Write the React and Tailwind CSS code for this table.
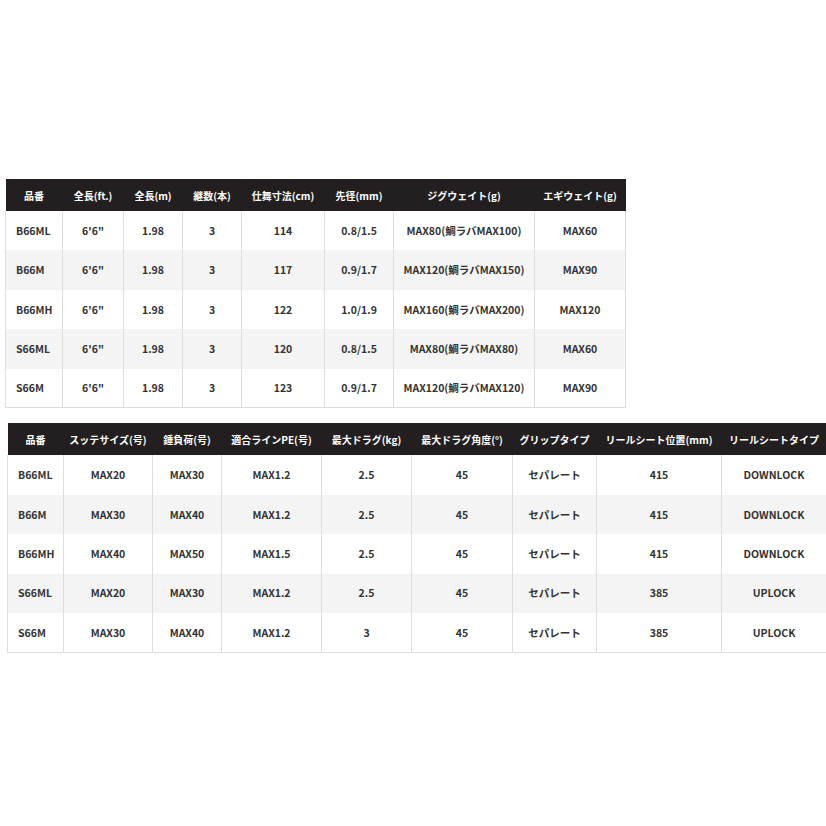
const spec1 = {
  cols: [57, 61, 59, 59, 83, 69, 141, 91],
  head: ["品番", "全長(ft.)", "全長(m)", "継数(本)", "仕舞寸法(cm)", "先径(mm)", "ジグウェイト(g)", "エギウェイト(g)"],
  rows: [
    ["B66ML", "6'6\"", "1.98", "3", "114", "0.8/1.5", "MAX80(鯛ラバMAX100)", "MAX60"],
    ["B66M", "6'6\"", "1.98", "3", "117", "0.9/1.7", "MAX120(鯛ラバMAX150)", "MAX90"],
    ["B66MH", "6'6\"", "1.98", "3", "122", "1.0/1.9", "MAX160(鯛ラバMAX200)", "MAX120"],
    ["S66ML", "6'6\"", "1.98", "3", "120", "0.8/1.5", "MAX80(鯛ラバMAX80)", "MAX60"],
    ["S66M", "6'6\"", "1.98", "3", "123", "0.9/1.7", "MAX120(鯛ラバMAX120)", "MAX90"],
  ],
};

const spec2 = {
  cols: [56, 89, 69, 100, 90, 101, 84, 125, 105],
  head: ["品番", "スッテサイズ(号)", "錘負荷(号)", "適合ラインPE(号)", "最大ドラグ(kg)", "最大ドラグ角度(°)", "グリップタイプ", "リールシート位置(mm)", "リールシートタイプ"],
  rows: [
    ["B66ML", "MAX20", "MAX30", "MAX1.2", "2.5", "45", "セパレート", "415", "DOWNLOCK"],
    ["B66M", "MAX30", "MAX40", "MAX1.2", "2.5", "45", "セパレート", "415", "DOWNLOCK"],
    ["B66MH", "MAX40", "MAX50", "MAX1.5", "2.5", "45", "セパレート", "415", "DOWNLOCK"],
    ["S66ML", "MAX20", "MAX30", "MAX1.2", "2.5", "45", "セパレート", "385", "UPLOCK"],
    ["S66M", "MAX30", "MAX40", "MAX1.2", "3", "45", "セパレート", "385", "UPLOCK"],
  ],
};

function SpecTable({ spec, className }) {
  const total = spec.cols.reduce((a, b) => a + b, 0);
  return (
    <table
      className={`table-fixed border-collapse font-bold ${className}`}
      style={{ width: total }}
    >
      <colgroup>
        {spec.cols.map((w, i) => (
          <col key={i} style={{ width: w }} />
        ))}
      </colgroup>
      <thead>
        <tr className="h-[32px] bg-[#231f20] text-white text-[10px]">
          {spec.head.map((h) => (
            <th key={h} className="px-1 text-center font-bold whitespace-nowrap">
              {h}
            </th>
          ))}
        </tr>
      </thead>
      <tbody className="text-[#333333] text-[10.5px] border-b border-[#dddddd]">
        {spec.rows.map((row, r) => (
          <tr key={r} className={`h-[39.4px] ${r % 2 === 1 ? "bg-[#f4f4f4]" : "bg-white"}`}>
            {row.map((cell, c) => (
              <td
                key={c}
                className={`border-x border-[#dddddd] whitespace-nowrap ${
                  c === 0 ? "text-left pl-[10px]" : "text-center"
                }`}
              >
                {cell}
              </td>
            ))}
          </tr>
        ))}
      </tbody>
    </table>
  );
}

export default function App() {
  return (
    <div
      className="w-[826px] h-[826px] bg-white pt-[179px]"
      style={{ fontFamily: '"Noto Sans CJK JP", "Noto Sans", sans-serif' }}
    >
      <SpecTable spec={spec1} className="ml-[5px]" />
      <SpecTable spec={spec2} className="ml-[7px] mt-[15px]" />
    </div>
  );
}
